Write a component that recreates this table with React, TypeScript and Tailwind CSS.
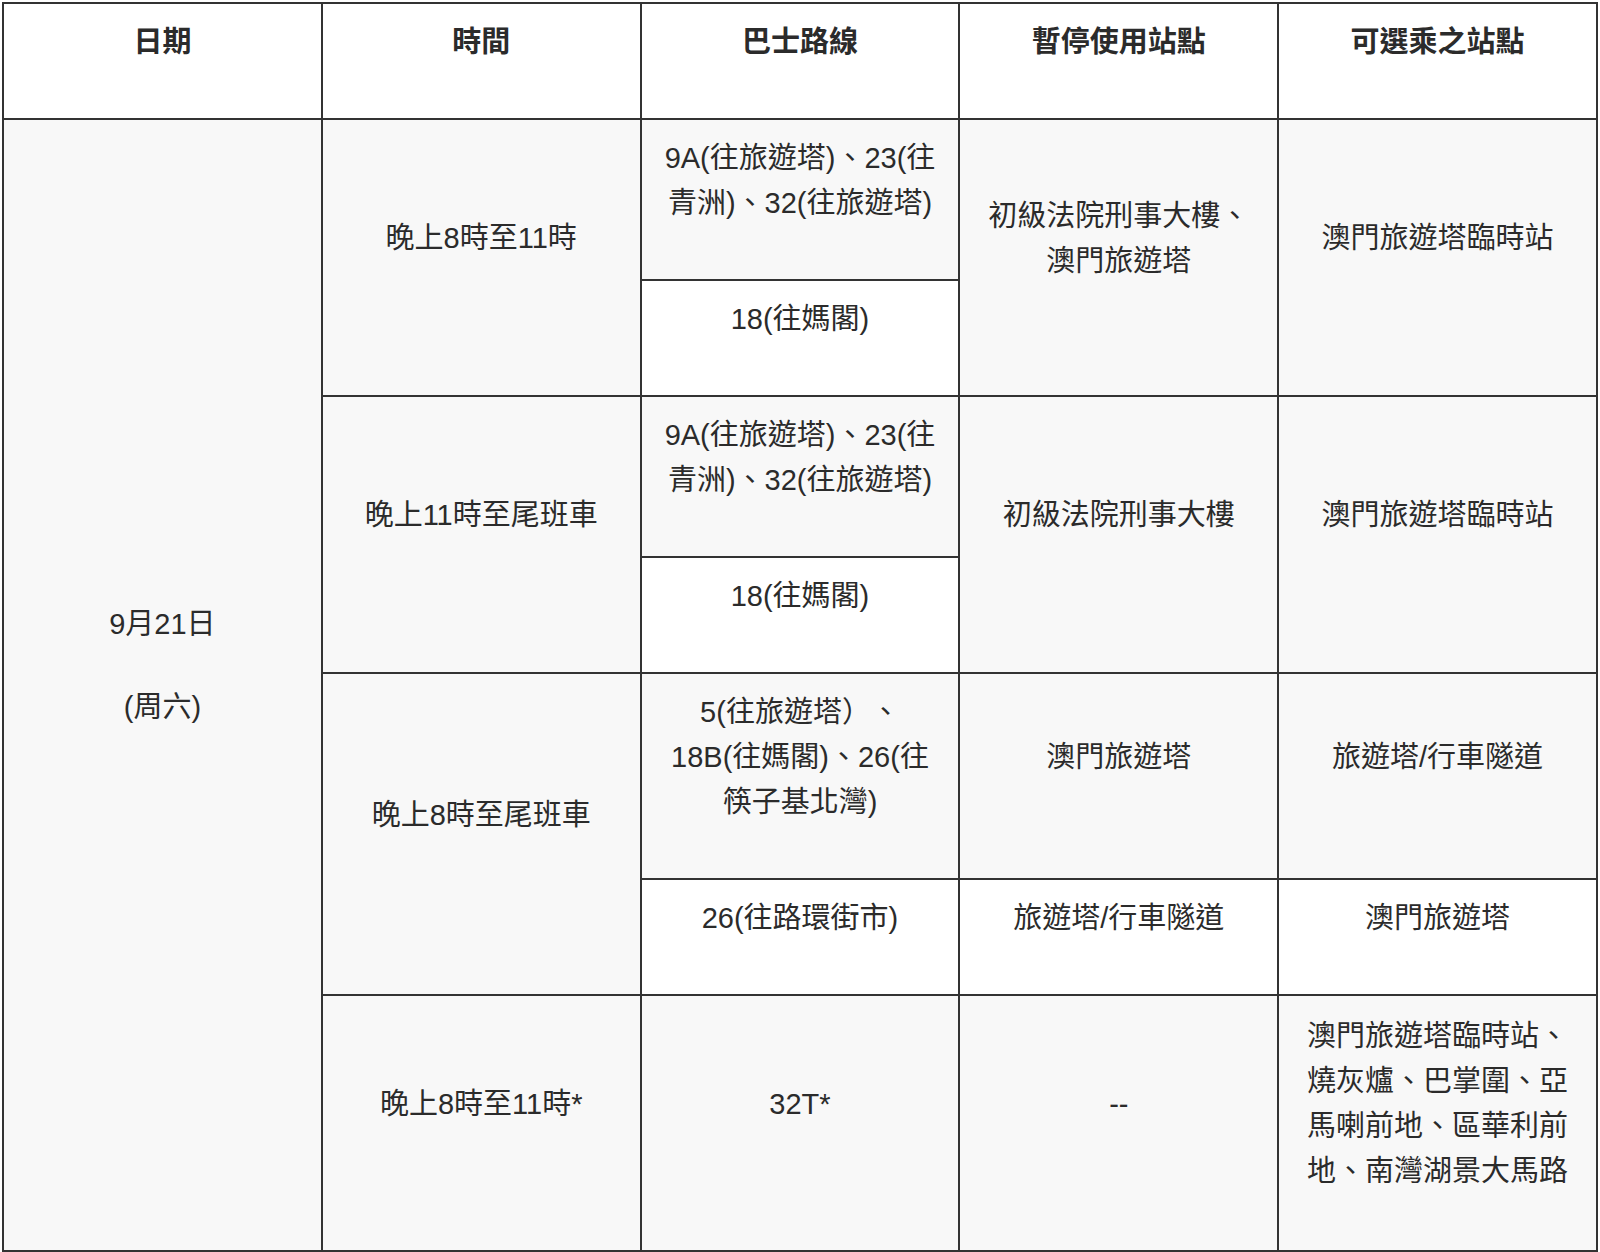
const cell =
  "border-2 border-[#333] px-5 py-[15.5px] align-middle text-center";
const lastCell =
  "border-2 border-[#333] px-5 py-[18px] align-middle text-center";

function Lines({ items }: { items: string[] }) {
  return (
    <>
      {items.map((t) => (
        <p key={t} className="mb-[38px]">
          {t}
        </p>
      ))}
    </>
  );
}

export default function App() {
  return (
    <div className="min-h-screen bg-white p-[2px] font-['Liberation_Sans','Noto_Sans_CJK_TC',sans-serif] text-[29px] leading-[45px] text-[#2b2b2b] [text-spacing-trim:space-all]">
      <table className="w-full table-fixed border-collapse border-2 border-[#333]">
        <thead>
          <tr className="bg-white font-bold">
            {["日期", "時間", "巴士路線", "暫停使用站點", "可選乘之站點"].map((h) => (
              <th key={h} className={cell + " font-bold"}>
                <Lines items={[h]} />
              </th>
            ))}
          </tr>
        </thead>
        <tbody>
          {/* 晚上8時至11時 */}
          <tr className="bg-[#f8f8f8]">
            <td rowSpan={7} className={cell}>
              <Lines items={["9月21日", "(周六)"]} />
            </td>
            <td rowSpan={2} className={cell}>
              <Lines items={["晚上8時至11時"]} />
            </td>
            <td className={cell}>
              <Lines items={["9A(往旅遊塔)、23(往青洲)、32(往旅遊塔)"]} />
            </td>
            <td rowSpan={2} className={cell}>
              <Lines items={["初級法院刑事大樓、澳門旅遊塔"]} />
            </td>
            <td rowSpan={2} className={cell}>
              <Lines items={["澳門旅遊塔臨時站"]} />
            </td>
          </tr>
          <tr className="bg-white">
            <td className={cell}>
              <Lines items={["18(往媽閣)"]} />
            </td>
          </tr>

          {/* 晚上11時至尾班車 */}
          <tr className="bg-[#f8f8f8]">
            <td rowSpan={2} className={cell}>
              <Lines items={["晚上11時至尾班車"]} />
            </td>
            <td className={cell}>
              <Lines items={["9A(往旅遊塔)、23(往青洲)、32(往旅遊塔)"]} />
            </td>
            <td rowSpan={2} className={cell}>
              <Lines items={["初級法院刑事大樓"]} />
            </td>
            <td rowSpan={2} className={cell}>
              <Lines items={["澳門旅遊塔臨時站"]} />
            </td>
          </tr>
          <tr className="bg-white">
            <td className={cell}>
              <Lines items={["18(往媽閣)"]} />
            </td>
          </tr>

          {/* 晚上8時至尾班車 */}
          <tr className="bg-[#f8f8f8]">
            <td rowSpan={2} className={cell}>
              <Lines items={["晚上8時至尾班車"]} />
            </td>
            <td className={cell}>
              <Lines items={["5(往旅遊塔）、18B(往媽閣)、26(往筷子基北灣)"]} />
            </td>
            <td className={cell}>
              <Lines items={["澳門旅遊塔"]} />
            </td>
            <td className={cell}>
              <Lines items={["旅遊塔/行車隧道"]} />
            </td>
          </tr>
          <tr className="bg-white">
            <td className={cell}>
              <Lines items={["26(往路環街市)"]} />
            </td>
            <td className={cell}>
              <Lines items={["旅遊塔/行車隧道"]} />
            </td>
            <td className={cell}>
              <Lines items={["澳門旅遊塔"]} />
            </td>
          </tr>

          {/* 32T */}
          <tr className="bg-[#f8f8f8]">
            <td className={lastCell}>
              <Lines items={["晚上8時至11時*"]} />
            </td>
            <td className={lastCell}>
              <Lines items={["32T*"]} />
            </td>
            <td className={lastCell}>
              <Lines items={["--"]} />
            </td>
            <td className={lastCell}>
              <Lines
                items={["澳門旅遊塔臨時站、燒灰爐、巴掌圍、亞馬喇前地、區華利前地、南灣湖景大馬路"]}
              />
            </td>
          </tr>
        </tbody>
      </table>
    </div>
  );
}
